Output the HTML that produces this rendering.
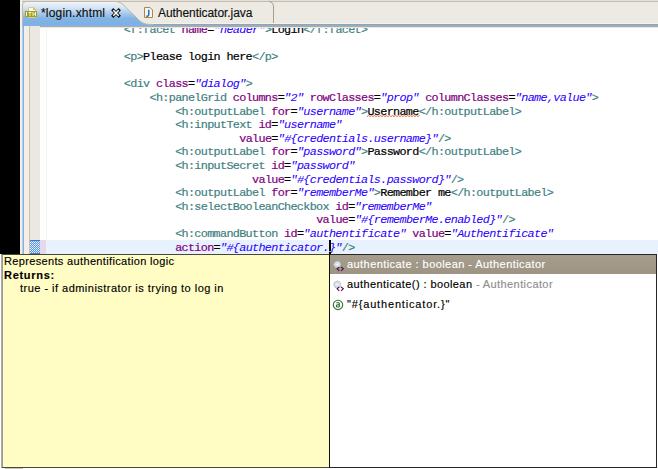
<!DOCTYPE html>
<html><head><meta charset="utf-8">
<style>
html,body{margin:0;padding:0;}
body{width:658px;height:469px;position:relative;overflow:hidden;background:#fff;font-family:"Liberation Sans",sans-serif;}
.a{position:absolute;}
.code{position:absolute;white-space:pre;-webkit-text-stroke:0.2px currentColor;font-family:"Liberation Mono",monospace;font-size:11.8px;letter-spacing:-0.6727px;line-height:13.625px;height:13.625px;color:#000;}
.t{color:#3F7F7F;}
.n{color:#7F007F;}
.v{color:#2A00FF;font-style:italic;-webkit-text-stroke:0.05px currentColor;}
.ui{position:absolute;white-space:pre;-webkit-text-stroke:0.15px currentColor;font-family:"Liberation Sans",sans-serif;font-size:11.7px;line-height:13px;color:#000;}
</style></head><body>
<div class="a" style="left:0;top:0;width:20px;height:254px;background:#000"></div>
<div class="a" style="left:20px;top:0;width:2px;height:254px;background:#F3EEE6"></div>
<div class="a" style="left:22px;top:0;width:636px;height:26px;background:#EDEAE4"></div>
<div class="a" style="left:22px;top:0;width:636px;height:1px;background:#E4DFD8"></div>
<div class="a" style="left:22px;top:1px;width:636px;height:1px;background:#C6BDB0"></div>
<div class="a" style="left:22px;top:24px;width:636px;height:1px;background:#A99F8F"></div>

<!-- inactive tab separator -->
<svg class="a" style="left:260px;top:0" width="20" height="26">
  <path d="M9,1.5 Q13.5,2 13.5,7 L13.5,24" fill="none" stroke="#A89E8E" stroke-width="1"/>
</svg>

<!-- active tab -->
<svg class="a" style="left:22px;top:0" width="140" height="26">
  <defs>
    <linearGradient id="tg" x1="0" y1="0" x2="0" y2="1">
      <stop offset="0.05" stop-color="#EDF3FA"/>
      <stop offset="0.3" stop-color="#CFE0F3"/>
      <stop offset="0.5" stop-color="#A5C8EC"/>
      <stop offset="0.7" stop-color="#82B3E4"/>
      <stop offset="1" stop-color="#7CB0E3"/>
    </linearGradient>
  </defs>
  <path d="M0.5,26 L0.5,6 Q0.5,1.5 5,1.5 L93,1.5 C97,1.5 99,3 102,5.5 L118,21 C121,23.5 124,24.5 131,24.5 L131,26 Z" fill="url(#tg)"/>
  <path d="M0.5,26 L0.5,6 Q0.5,1.5 5,1.5 L93,1.5 C97,1.5 99,3 102,5.5 L118,21 C121,23.5 124,24.5 131,24.5" fill="none" stroke="#C2B8A8" stroke-width="1"/>
</svg>
<div class="a" style="left:22px;top:25px;width:636px;height:1px;background:#7DB3EA"></div>
<div class="a" style="left:152px;top:23px;width:506px;height:1px;background:#F4F2ED"></div>
<div class="a" style="left:40px;top:26px;width:618px;height:1px;background:#A6ADAF"></div>
<div class="a" style="left:40px;top:27px;width:618px;height:1px;background:#ECE6DE"></div>

<!-- html icon -->
<svg class="a" style="left:24px;top:6px" width="14" height="13">
  <path d="M4.5,1.5 L9.5,1.5 L11.5,3.5 L11.5,11.5 L4.5,11.5 Z" fill="#FBF8F0" stroke="#D8C8A0" stroke-width="1"/>
  <path d="M9.5,1.5 L9.5,3.5 L11.5,3.5" fill="#E8C070" stroke="#D0A850" stroke-width="0.8"/>
  <rect x="1" y="5" width="12" height="6" fill="#A39E1B"/>
  <path d="M2.5,6 v4 M4.5,6.5 h3 M6,6.5 v3.5 M9,6 v4 M11.5,6 v4 M9,8 h2.5" stroke="#F6F4D0" stroke-width="1"/>
</svg>
<div class="ui" style="left:41.00px;top:7.25px;font-size:12.00px;letter-spacing:0.182px;color:#101010;">*login.xhtml</div>
<!-- close X -->
<svg class="a" style="left:111px;top:8px" width="10" height="10">
  <path d="M2.3,2.3 L7.7,7.7 M7.7,2.3 L2.3,7.7" stroke="#111" stroke-width="3.1" stroke-linecap="square"/>
  <path d="M2.3,2.3 L7.7,7.7 M7.7,2.3 L2.3,7.7" stroke="#fff" stroke-width="1.5" stroke-linecap="butt"/>
</svg>

<!-- java icon -->
<svg class="a" style="left:143px;top:6px" width="11" height="13">
  <path d="M1.5,1.5 L7,1.5 L9.5,4 L9.5,11.5 L1.5,11.5 Z" fill="#F2F6FC" stroke="#AC8A34" stroke-width="1"/>
  <path d="M5.8,3.8 L5.8,8.6 Q5.8,10.2 4.2,10.2 L3.2,10.2" fill="none" stroke="#2F6AB5" stroke-width="1.5"/>
</svg>
<div class="ui" style="left:158.00px;top:7.25px;font-size:12.00px;letter-spacing:-0.059px;color:#101010;">Authenticator.java</div>

<!-- gutter -->
<div class="a" style="left:22px;top:26px;width:1px;height:228px;background:#B3CDEA"></div>
<div class="a" style="left:23px;top:26px;width:1px;height:228px;background:#7DB3EA"></div>
<div class="a" style="left:24px;top:26px;width:5px;height:228px;background:#F3EEE6"></div>
<div class="a" style="left:29px;top:26px;width:1px;height:228px;background:#C9C0B3"></div>
<div class="a" style="left:30px;top:26px;width:10px;height:228px;background:#EBE8E2"></div>
<div class="a" style="left:46px;top:27px;width:1px;height:227px;background:#F4F2EE"></div>

<!-- current line -->
<div class="a" style="left:47px;top:240px;width:611px;height:14px;background:#E8F2FE"></div>
<div class="a" style="left:40px;top:240px;width:6px;height:14px;background:#E5D8EB"></div>
<div class="a" style="left:46px;top:240px;width:1px;height:14px;background:#F0F0F8"></div>
<svg class="a" style="left:30px;top:240px" width="10" height="14">
  <defs><pattern id="ck" width="2" height="2" patternUnits="userSpaceOnUse">
    <rect width="2" height="2" fill="#5B97E0"/><rect width="1" height="1" fill="#F2F7FD"/><rect x="1" y="1" width="1" height="1" fill="#C8DCF4"/>
  </pattern></defs>
  <rect width="10" height="14" fill="url(#ck)"/>
  <rect x="0" y="0" width="10" height="1" fill="#3A7CD4"/>
  <rect x="0" y="13" width="10" height="1" fill="#3A7CD4"/>
</svg>

<div style="position:absolute;left:0;top:28px;width:658px;height:226px;overflow:hidden">
<div style="position:absolute;left:0;top:-28px;width:658px;height:300px">
<div class="code" style="top:24.00px;left:123.87px"><span class="t">&lt;f:facet</span> <span class="n">name</span>=<span class="v">"header"</span><span class="t">&gt;</span>Login<span class="t">&lt;/f:facet&gt;</span></div>
<div class="code" style="top:51.00px;left:123.87px"><span class="t">&lt;p&gt;</span>Please login here<span class="t">&lt;/p&gt;</span></div>
<div class="code" style="top:78.00px;left:123.87px"><span class="t">&lt;div</span> <span class="n">class</span>=<span class="v">"dialog"</span><span class="t">&gt;</span></div>
<div class="code" style="top:92.00px;left:149.51px"><span class="t">&lt;h:panelGrid</span> <span class="n">columns</span>=<span class="v">"2"</span> <span class="n">rowClasses</span>=<span class="v">"prop"</span> <span class="n">columnClasses</span>=<span class="v">"name,value"</span><span class="t">&gt;</span></div>
<div class="code" style="top:106.00px;left:175.15px"><span class="t">&lt;h:outputLabel</span> <span class="n">for</span>=<span class="v">"username"</span><span class="t">&gt;</span>Username<span class="t">&lt;/h:outputLabel&gt;</span></div>
<div class="code" style="top:119.00px;left:175.15px"><span class="t">&lt;h:inputText</span> <span class="n">id</span>=<span class="v">"username"</span></div>
<div class="code" style="top:133.00px;left:239.25px"><span class="n">value</span>=<span class="v">"#{credentials.username}"</span><span class="t">/&gt;</span></div>
<div class="code" style="top:146.00px;left:175.15px"><span class="t">&lt;h:outputLabel</span> <span class="n">for</span>=<span class="v">"password"</span><span class="t">&gt;</span>Password<span class="t">&lt;/h:outputLabel&gt;</span></div>
<div class="code" style="top:160.00px;left:175.15px"><span class="t">&lt;h:inputSecret</span> <span class="n">id</span>=<span class="v">"password"</span></div>
<div class="code" style="top:174.00px;left:252.07px"><span class="n">value</span>=<span class="v">"#{credentials.password}"</span><span class="t">/&gt;</span></div>
<div class="code" style="top:187.00px;left:175.15px"><span class="t">&lt;h:outputLabel</span> <span class="n">for</span>=<span class="v">"rememberMe"</span><span class="t">&gt;</span>Remember me<span class="t">&lt;/h:outputLabel&gt;</span></div>
<div class="code" style="top:201.00px;left:175.15px"><span class="t">&lt;h:selectBooleanCheckbox</span> <span class="n">id</span>=<span class="v">"rememberMe"</span></div>
<div class="code" style="top:214.00px;left:316.17px"><span class="n">value</span>=<span class="v">"#{rememberMe.enabled}"</span><span class="t">/&gt;</span></div>
<div class="code" style="top:228.00px;left:175.15px"><span class="t">&lt;h:commandButton</span> <span class="n">id</span>=<span class="v">"authentificate"</span> <span class="n">value</span>=<span class="v">"Authentificate"</span></div>
<div class="code" style="top:242.00px;left:175.15px"><span class="n">action</span>=<span class="v">"#{authenticator.}"</span><span class="t">/&gt;</span></div>
</div>
</div>
<!-- spelling squiggle under Username -->
<svg class="a" style="left:367px;top:114px" width="53" height="4">
  <path d="M0,3 L1.5,1 L3.0,3 L4.5,1 L6.0,3 L7.5,1 L9.0,3 L10.5,1 L12.0,3 L13.5,1 L15.0,3 L16.5,1 L18.0,3 L19.5,1 L21.0,3 L22.5,1 L24.0,3 L25.5,1 L27.0,3 L28.5,1 L30.0,3 L31.5,1 L33.0,3 L34.5,1 L36.0,3 L37.5,1 L39.0,3 L40.5,1 L42.0,3 L43.5,1 L45.0,3 L46.5,1 L48.0,3 L49.5,1 L51.0,3 L52.5,1" fill="none" stroke="#F47850" stroke-width="0.9"/>
</svg>
<!-- cursor -->
<div class="a" style="left:329px;top:240px;width:1.5px;height:14px;background:#000"></div>
<div class="a" style="left:329px;top:251px;width:1.5px;height:1px;background:#7CC840"></div>

<!-- tooltip -->
<div class="a" style="left:1px;top:254px;width:328px;height:214px;background:#FFFDC4;box-sizing:border-box;border-top:1px solid #47473A;border-bottom:1px solid #47473A"></div>
<div class="a" style="left:1px;top:254px;width:1px;height:214px;background:#A9A9B0"></div>
<div class="a" style="left:2px;top:255px;width:1px;height:212px;background:#9E9E86"></div>
<div class="a" style="left:0;top:258px;width:1px;height:5px;background:#4070C0"></div>
<div class="a" style="left:0;top:279px;width:1px;height:6px;background:#904040"></div>
<div class="a" style="left:5px;top:468px;width:18px;height:1px;background:#C8C4BE"></div>
<div class="a" style="left:0;top:254px;width:1px;height:215px;background:#fff"></div>
<div class="ui" style="left:4.00px;top:255.00px;font-size:11.00px;letter-spacing:0.344px;color:#000;">Represents authentification logic</div>
<div class="ui" style="left:4.00px;top:268.50px;font-size:11.00px;letter-spacing:0.714px;color:#000;font-weight:bold;">Returns:</div>
<div class="ui" style="left:20.00px;top:281.75px;font-size:11.00px;letter-spacing:0.476px;color:#000;">true - if administrator is trying to log in</div>

<!-- completion list -->
<div class="a" style="left:329px;top:254px;width:328px;height:214px;background:#fff;box-sizing:border-box;border:1px solid #262626;border-left:1.5px solid #111"></div>
<div class="a" style="left:330px;top:255px;width:326px;height:19px;background:linear-gradient(#A69D8D,#9D9484)"></div>
<!-- method icons -->
<svg class="a" style="left:332px;top:260px" width="14" height="13">
  <path d="M5,0.8 L6.2,1.6 L7.6,1.4 L8,2.9 L9,4 L8.3,5.3 L8.4,6.8 L6.9,7 L5.8,8 L4.6,7.3 L3.1,7.5 L2.8,6 L1.4,5 L2.2,3.8 L2.3,2.2 L3.8,2 Z" fill="#E4EBF1" stroke="#A9B1B8" stroke-width="0.8"/>
  <circle cx="5.2" cy="4.4" r="1.5" fill="#FAFCFE" stroke="#BCC6CE" stroke-width="0.6"/>
  <path d="M7.3,6.8 L5.1,8.8 L7.3,10.8 M9,6.8 L11.3,8.8 L9,10.8" fill="none" stroke="#4E0C52" stroke-width="1.1"/>
</svg>
<svg class="a" style="left:332px;top:280px" width="14" height="13">
  <path d="M5,0.8 L6.2,1.6 L7.6,1.4 L8,2.9 L9,4 L8.3,5.3 L8.4,6.8 L6.9,7 L5.8,8 L4.6,7.3 L3.1,7.5 L2.8,6 L1.4,5 L2.2,3.8 L2.3,2.2 L3.8,2 Z" fill="#E4EBF1" stroke="#A9B1B8" stroke-width="0.8"/>
  <circle cx="5.2" cy="4.4" r="1.5" fill="#FAFCFE" stroke="#BCC6CE" stroke-width="0.6"/>
  <path d="M7.3,6.8 L5.1,8.8 L7.3,10.8 M9,6.8 L11.3,8.8 L9,10.8" fill="none" stroke="#4E0C52" stroke-width="1.1"/>
</svg>
<svg class="a" style="left:332px;top:299px" width="12" height="12">
  <circle cx="6" cy="5.9" r="4.7" fill="#fff" stroke="#2C7A32" stroke-width="1.1"/>
  <path d="M4.3,3.8 L6.6,3.8 Q7.3,3.8 7.3,4.6 L7.3,8.2 M7.1,5.8 L5.4,5.8 Q4.4,5.8 4.4,7 Q4.4,8 5.4,8 L7.1,8" fill="none" stroke="#2C6A30" stroke-width="1.1"/>
</svg>
<div class="ui" style="left:347.00px;top:258.00px;font-size:11.00px;letter-spacing:0.432px;color:#fff;">authenticate : boolean - Authenticator</div>
<div class="ui" style="left:347.00px;top:277.75px;font-size:11.00px;letter-spacing:0.410px;color:#000;">authenticate() : boolean <span style="color:#8E8E8E">- Authenticator</span></div>
<div class="ui" style="left:347.00px;top:297.75px;font-size:11.00px;letter-spacing:0.833px;color:#000;">"#{authenticator.}"</div>
</body></html>
